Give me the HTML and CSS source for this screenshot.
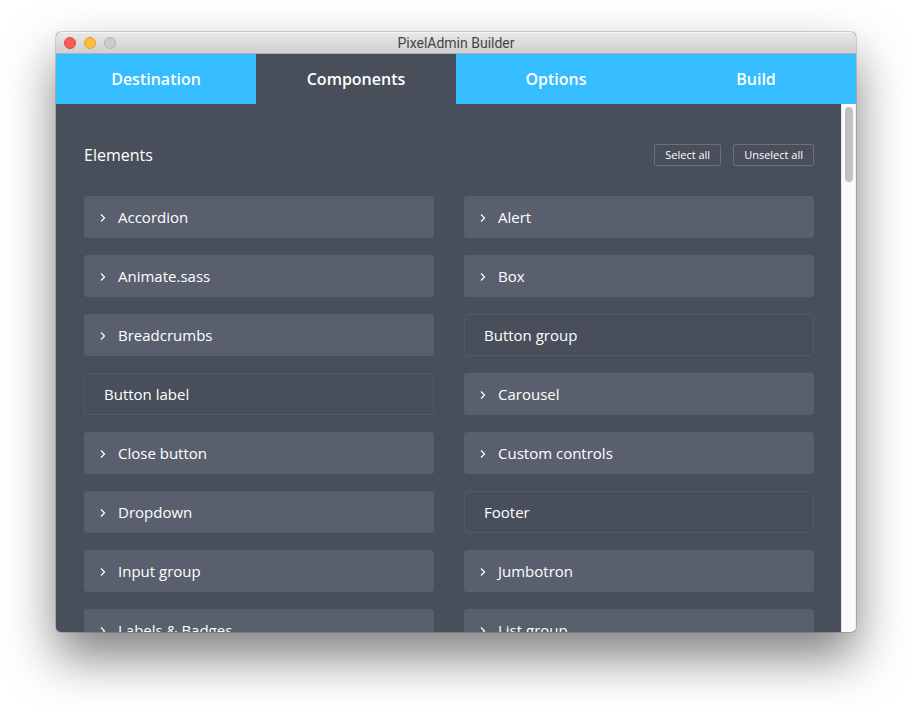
FILE: index.html
```html
<!DOCTYPE html>
<html lang="en">
<head>
<meta charset="utf-8">
<title>PixelAdmin Builder</title>
<link rel="stylesheet" href="styles.css">
</head>
<body>
<svg class="sprite" aria-hidden="true">
  <symbol id="chevron" viewBox="0 0 6 9"><path d="M1 1.5 4.5 5 1 8.5" fill="none" stroke="currentColor" stroke-width="1.2"/></symbol>
</svg>
<div class="window">
  <header class="titlebar">
    <div class="lights">
      <button class="light close" aria-label="Close"></button>
      <button class="light minimize" aria-label="Minimize"></button>
      <button class="light zoom" aria-label="Zoom" disabled></button>
    </div>
    <h1 class="title">PixelAdmin Builder</h1>
  </header>
  <nav class="tabs">
    <a class="tab" href="#destination">Destination</a>
    <a class="tab active" href="#components" aria-current="page">Components</a>
    <a class="tab" href="#options">Options</a>
    <a class="tab" href="#build">Build</a>
  </nav>
  <div class="body">
    <main class="content" id="components">
      <div class="section-head">
        <h2 class="section-title">Elements</h2>
        <div class="actions">
          <button class="action">Select all</button>
          <button class="action">Unselect all</button>
        </div>
      </div>
      <div class="grid">
        <button class="item selected"><svg class="chevron"><use href="#chevron"/></svg>Accordion</button>
        <button class="item selected"><svg class="chevron"><use href="#chevron"/></svg>Alert</button>
        <button class="item selected"><svg class="chevron"><use href="#chevron"/></svg>Animate.sass</button>
        <button class="item selected"><svg class="chevron"><use href="#chevron"/></svg>Box</button>
        <button class="item selected"><svg class="chevron"><use href="#chevron"/></svg>Breadcrumbs</button>
        <button class="item">Button group</button>
        <button class="item">Button label</button>
        <button class="item selected"><svg class="chevron"><use href="#chevron"/></svg>Carousel</button>
        <button class="item selected"><svg class="chevron"><use href="#chevron"/></svg>Close button</button>
        <button class="item selected"><svg class="chevron"><use href="#chevron"/></svg>Custom controls</button>
        <button class="item selected"><svg class="chevron"><use href="#chevron"/></svg>Dropdown</button>
        <button class="item">Footer</button>
        <button class="item selected"><svg class="chevron"><use href="#chevron"/></svg>Input group</button>
        <button class="item selected"><svg class="chevron"><use href="#chevron"/></svg>Jumbotron</button>
        <button class="item selected"><svg class="chevron"><use href="#chevron"/></svg>Labels &amp; Badges</button>
        <button class="item selected"><svg class="chevron"><use href="#chevron"/></svg>List group</button>
      </div>
    </main>
    <div class="scrollbar"><div class="thumb"></div></div>
  </div>
</div>
</body>
</html>
```
FILE: styles.css
```css
* { box-sizing: border-box; }

body {
  margin: 0;
  height: 100vh;
  padding: 32px 56px 80px;
  background: #fff;
  font-family: "Open Sans", sans-serif;
  color: #fff;
}

button {
  font: inherit;
  color: inherit;
  background: none;
  padding: 0;
}

.sprite {
  position: absolute;
  width: 0;
  height: 0;
}

.window {
  display: flex;
  flex-direction: column;
  height: 100%;
  border-radius: 5px;
  overflow: hidden;
  background: #484e5a;
  box-shadow: 0 0 0 1px rgba(0, 0, 0, .15), 0 25px 50px rgba(0, 0, 0, .5);
}

.titlebar {
  display: grid;
  grid-template-columns: 1fr auto 1fr;
  align-items: center;
  flex: none;
  height: 22px;
  padding: 0 8px;
  background: linear-gradient(#e8e8e8, #d0d0d0);
  border-top: 1px solid #f5f5f5;
  border-bottom: 1px solid #b0b0b0;
}

.lights {
  display: flex;
  gap: 8px;
}

.light {
  width: 12px;
  height: 12px;
  border: 1px solid;
  border-radius: 50%;
}

.close { background: #ff5a55; border-color: #e0443f; }
.minimize { background: #ffbc3c; border-color: #dfa02f; }
.zoom { background: #cdcdcd; border-color: #b4b4b4; }

.title {
  margin: 0;
  font: 400 14px/20px Roboto, sans-serif;
  color: #454545;
}

.tabs {
  display: flex;
  flex: none;
  background: #35bdff;
}

.tab {
  flex: 1;
  font-size: 16px;
  font-weight: 600;
  line-height: 50px;
  text-align: center;
  text-decoration: none;
  color: #fff;
}

.tab.active { background: #484e5a; }

.body {
  display: flex;
  flex: 1;
  min-height: 0;
}

.content {
  flex: 1;
  overflow: hidden;
  padding: 40px 27px 0 28px;
}

.section-head {
  display: flex;
  justify-content: space-between;
  align-items: center;
  margin-bottom: 30px;
}

.section-title {
  margin: 0;
  font-size: 16px;
  font-weight: 400;
  line-height: 22px;
}

.actions {
  display: flex;
  gap: 12px;
}

.action {
  height: 22px;
  padding: 0 10px;
  border: 1px solid #6a707b;
  border-radius: 2px;
  font-size: 11px;
  line-height: 20px;
}

.grid {
  display: grid;
  grid-template-columns: 1fr 1fr;
  gap: 17px 30px;
}

.item {
  display: flex;
  align-items: center;
  height: 42px;
  padding: 0 19px;
  border: 1px solid #535965;
  border-radius: 3px;
  font-size: 15px;
  line-height: 40px;
  text-align: left;
}

.item.selected {
  padding-left: 15px;
  border-color: #595f6c;
  background: #595f6c;
}

.chevron {
  width: 6px;
  height: 9px;
  margin-right: 12px;
}

.scrollbar {
  flex: none;
  width: 15px;
  padding: 3px 3px 3px 4px;
  background: #fafafa;
  border-left: 1px solid #e8e8e8;
  border-right: 1px solid #ededed;
}

.thumb {
  width: 8px;
  height: 75px;
  margin-left: -1px;
  border-radius: 4px;
  background: #c1c1c1;
}
```
